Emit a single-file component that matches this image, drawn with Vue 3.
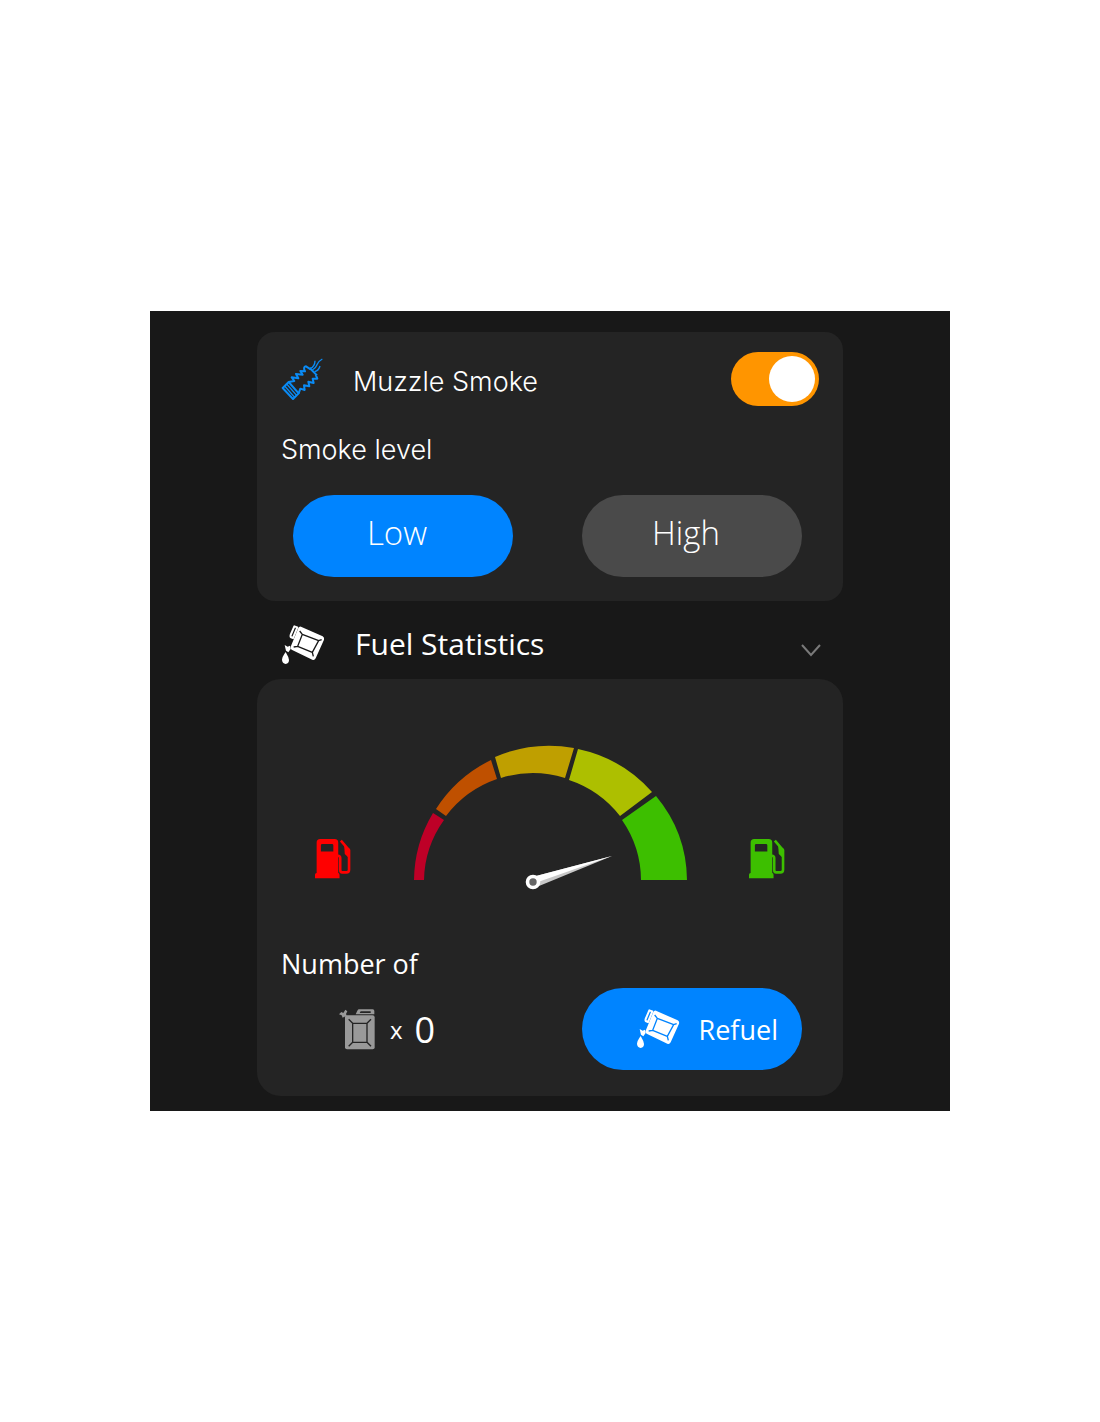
<template>
  <main class="page">
    <!-- shared icon shapes -->
    <svg class="sprite" aria-hidden="true">
      <symbol id="can-pour" viewBox="27 33 132 120">
        <path
          d="M87 38 L152 67 Q158 71 156 77 L131 133 Q127 140 121 137 L59 107 Q54 104 56 98 L79 42 Q82 36 87 38Z"
          fill="currentColor" />
        <path
          d="M91 61 L140 80 L121 115 L77 97Z M91 61 L83 51 M140 80 L149 77 M121 115 L124 127 M77 97 L65 99"
          class="can-lines" />
        <path d="M67 37 L76 40 L63 72 L56 69 Q55 66 56 63Z" class="can-handle" />
        <path d="M38 93 L47 98 L54 95 L56 105 L49 115 L42 110Z" fill="currentColor" />
        <path d="M41 114 Q30 129 30 138 Q31 149 41 150 Q51 149 51 138 Q50 129 41 114Z" fill="currentColor" />
      </symbol>
      <symbol id="pump" viewBox="32 30 110 123">
        <path
          fill="currentColor"
          fill-rule="evenodd"
          d="M48 32 H92 Q103 32 103 43 V136 Q107 137 107 141 V152 H32 V141 Q32 137 37 136 V43 Q37 32 48 32Z M54 47 Q50 47 50 51 V70 H88 V51 Q88 47 84 47Z" />
        <path
          fill="none"
          stroke="currentColor"
          stroke-width="8"
          d="M100 83 H102 Q109 83 109 90 V126 Q109 134 115 134 H128 Q136 134 136 126 V66 L111 37" />
        <path fill="currentColor" d="M121 50 L138 62 V92 L123 78Z" />
      </symbol>
    </svg>

    <div class="panel">
      <section class="card smoke-card">
        <div class="smoke-header">
          <svg class="muzzle-icon" viewBox="26 26 126 126" aria-hidden="true">
            <path d="M49 98 L79 132 L62 149 L31 116Z" />
            <path class="stripes" d="M43 104 L73 138 M37 110 L67 144" />
            <path d="M49 98 L66 95 L58 84 L78 87 L71 74 L91 76 L84 65 L98 66 Q91 53 101 51 L115 60" />
            <path d="M112 56 L134 78 M130 76 L135 88 L121 88 L124 101 L108 97 L111 111 L95 108 L97 122 L84 118 L79 132" />
            <path class="smoke" d="M113 58 Q128 51 128 34 M120 62 Q130 57 134 46 Q140 34 150 29 M127 67 Q140 63 143 50" />
          </svg>
          <label class="smoke-title" for="muzzle-smoke">Muzzle Smoke</label>
          <input id="muzzle-smoke" v-model="smokeOn" class="toggle" type="checkbox" />
        </div>
        <h2 class="sub-title">Smoke level</h2>
        <div class="levels">
          <button
            v-for="item in levels"
            :key="item"
            type="button"
            class="pill level"
            :class="{ active: level === item }"
            @click="level = item">
            {{ item }}
          </button>
        </div>
      </section>

      <button type="button" class="section-toggle" :aria-expanded="fuelOpen" @click="fuelOpen = !fuelOpen">
        <svg class="pour-icon" aria-hidden="true"><use href="#can-pour" /></svg>
        <span class="section-title">Fuel Statistics</span>
        <svg class="chevron" viewBox="0 0 20 13" aria-hidden="true">
          <path d="M1 1 L10 11 L19 1" />
        </svg>
      </button>

      <section v-if="fuelOpen" class="card fuel-card">
        <div class="gauge-row">
          <svg class="pump empty" aria-hidden="true"><use href="#pump" /></svg>
          <svg class="gauge" viewBox="0 0 273 145" role="img" aria-label="Fuel gauge">
            <path v-for="arc in arcs" :key="arc.color" :d="arc.d" :fill="arc.color" />
            <path d="M122 131 L198 111 L125 141Z" fill="#c8c8c8" />
            <path d="M122 131 L198 111 L124 137Z" fill="#fff" />
            <circle cx="119" cy="137" r="5.5" fill="#666" stroke="#fff" stroke-width="3.6" />
          </svg>
          <svg class="pump full" aria-hidden="true"><use href="#pump" /></svg>
        </div>

        <h2 class="sub-title count-title">Number of</h2>
        <div class="fuel-footer">
          <div class="count">
            <svg class="can-icon" viewBox="27 25 108 123" aria-hidden="true">
              <rect x="45" y="44" width="89" height="102" rx="6" fill="currentColor" />
              <path
                d="M68 68 H111 V125 H68Z M68 68 L56 56 M111 68 L123 56 M111 125 L123 137 M68 125 L56 137"
                class="can-lines" />
              <path
                fill="currentColor"
                fill-rule="evenodd"
                d="M87 26 H128 Q133 26 133 31 V41 H77 L82 30 Q84 26 87 26Z M92 32 L89 37 H122 V32Z" />
              <path fill="currentColor" d="M27 41 L34 34 L40 37 L46 27 L52 32 L48 40 L51 47 L43 48 L38 51 L35 44Z" />
            </svg>
            <span class="times">x</span>
            <span class="amount">{{ cans }}</span>
          </div>
          <button type="button" class="pill refuel">
            <svg class="pour-icon" aria-hidden="true"><use href="#can-pour" /></svg>
            <span>Refuel</span>
          </button>
        </div>
      </section>
    </div>
  </main>
</template>

<script setup>
import { ref } from "vue";

const smokeOn = ref(true);
const levels = ["Low", "High"];
const level = ref("Low");
const fuelOpen = ref(true);
const cans = ref(0);

// outer and inner curves have different centers, so the band widens to the right
const arcs = [
  { color: "#be0027", d: "M0 135 A136 134 0 0 1 19 68 L30 75 A108 107 0 0 0 10 135Z" },
  { color: "#bf5000", d: "M22 64 A136 134 0 0 1 77 15 L83 34 A108 107 0 0 0 32 71Z" },
  { color: "#bf9f00", d: "M81 12 A136 134 0 0 1 160 3 L151 33 A108 107 0 0 0 87 33Z" },
  { color: "#adbf00", d: "M164 4 A136 134 0 0 1 238 47 L206 71 A108 107 0 0 0 155 35Z" },
  { color: "#3dbf00", d: "M242 51 A136 134 0 0 1 273 135 L227 135 A108 107 0 0 0 208 75Z" },
];
</script>

<style>
body {
  margin: 0;
  background: #fff;
}
</style>

<style scoped>
.page {
  min-height: 100vh;
  display: flex;
  align-items: center;
  justify-content: center;
  font-family: "Open Sans", "Noto Sans", sans-serif;
  color: #fff;
}

.sprite {
  position: absolute;
  width: 0;
  height: 0;
}

.panel {
  --line: #181818;
  box-sizing: border-box;
  width: 100%;
  max-width: 800px;
  padding: 21px 107px 15px;
  background: #181818;
}

.card {
  --line: #242424;
  box-sizing: border-box;
  background: #242424;
}

.smoke-card {
  padding: 20px 24px 24px;
  border-radius: 18px;
}

.fuel-card {
  padding: 66px 24px 26px;
  border-radius: 24px;
}

.smoke-header {
  display: flex;
  align-items: center;
}

.muzzle-icon {
  width: 42px;
  height: 42px;
  margin-right: 30px;
  fill: none;
  stroke: #0a8bf5;
  stroke-width: 6;
  stroke-linejoin: round;
}

.muzzle-icon .smoke,
.muzzle-icon .stripes {
  stroke-width: 4;
}

.smoke-title,
.smoke-card .sub-title {
  font-family: Inter, "Liberation Sans", sans-serif;
  font-size: 27px;
  font-weight: 300;
}

.smoke-title {
  padding-top: 5px;
}

.toggle {
  appearance: none;
  box-sizing: border-box;
  width: 88px;
  height: 54px;
  margin: 0 0 0 auto;
  padding: 4px;
  border-radius: 27px;
  background: #4a4a4a;
  cursor: pointer;
}

.toggle::before {
  content: "";
  display: block;
  width: 46px;
  height: 46px;
  border-radius: 50%;
  background: #fff;
}

.toggle:checked {
  background: #ff9500;
}

.toggle:checked::before {
  margin-left: auto;
}

.sub-title {
  margin: 0;
  font-size: 27px;
  font-weight: 400;
  line-height: 36px;
}

.smoke-card .sub-title {
  margin: 26px 0 27px;
}

.levels {
  display: flex;
  justify-content: space-between;
  padding: 0 17px 0 12px;
}

.pill {
  box-sizing: border-box;
  width: 220px;
  height: 82px;
  border: 0;
  border-radius: 41px;
  background: #4a4a4a;
  color: #fff;
  font-family: inherit;
  cursor: pointer;
}

.level {
  padding: 0 12px 8px 0;
  font-size: 33px;
  font-weight: 300;
}

.level.active,
.refuel {
  background: #0084ff;
}

.section-toggle {
  display: flex;
  align-items: center;
  width: 100%;
  height: 78px;
  padding: 10px 22px 0 24px;
  border: 0;
  background: none;
  color: #fff;
  font-family: inherit;
  cursor: pointer;
}

.pour-icon {
  flex: none;
  width: 44px;
  height: 40px;
}

.section-title {
  margin-left: 30px;
  padding-bottom: 4px;
  font-size: 30px;
}

.chevron {
  width: 20px;
  height: 13px;
  margin: 10px 0 0 auto;
  fill: none;
  stroke: #7a7a7a;
  stroke-width: 2;
}

.can-lines {
  fill: none;
  stroke: var(--line);
  stroke-width: 4;
}

.can-handle {
  fill: none;
  stroke: currentColor;
  stroke-width: 6;
  stroke-linejoin: round;
}

.gauge-row {
  display: flex;
  align-items: flex-end;
  justify-content: space-between;
  padding: 0 34px;
}

.gauge {
  width: 273px;
  height: 145px;
}

.pump {
  width: 36px;
  height: 41px;
  margin-bottom: 11px;
}

.empty {
  color: #ff0000;
}

.full {
  color: #3dbf00;
}

.count-title {
  margin: 56px 0 6px;
}

.fuel-footer {
  display: flex;
  align-items: center;
  justify-content: space-between;
  padding: 0 17px 0 58px;
}

.count {
  display: flex;
  align-items: center;
}

.can-icon {
  width: 36px;
  height: 41px;
  color: #999;
}

.times {
  margin: 0 12px 0 15px;
  font-size: 24px;
}

.amount {
  font-size: 36px;
}

.refuel {
  --line: #0084ff;
  display: flex;
  align-items: center;
  justify-content: space-between;
  padding: 0 24px 0 54px;
  font-size: 27px;
}

@media (max-width: 760px) {
  .panel {
    padding: 20px 16px;
  }

  .levels,
  .fuel-footer {
    flex-wrap: wrap;
    gap: 16px;
  }
}
</style>
